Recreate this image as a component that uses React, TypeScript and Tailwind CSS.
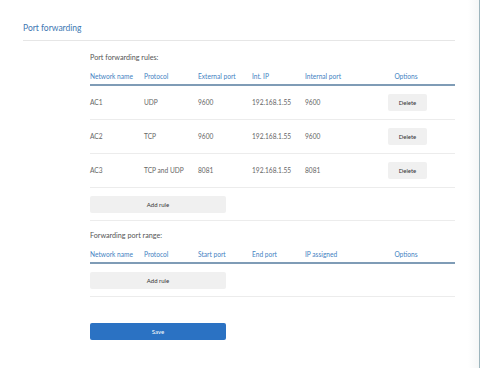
import React from "react";

const rules = [
  { name: "AC1", protocol: "UDP", ext: "9600", ip: "192.168.1.55", internal: "9600" },
  { name: "AC2", protocol: "TCP", ext: "9600", ip: "192.168.1.55", internal: "9600" },
  { name: "AC3", protocol: "TCP and UDP", ext: "8081", ip: "192.168.1.55", internal: "8081" },
];

const cols = "grid grid-cols-[54px_54px_54px_53px_54px_1fr] items-center";

function HeaderRow({ labels }: { labels: string[] }) {
  return (
    <div className={`${cols} h-[16px] border-b-2 border-[#7f9cb6] text-[6.6px] text-[#4382c2]`}>
      {labels.map((l, i) => (
        <div key={l} className={i === 5 ? "text-center pr-[2px]" : ""}>
          {l}
        </div>
      ))}
    </div>
  );
}

function AddRule() {
  return (
    <div className="h-[33px] flex items-center border-b border-[#ececec]">
      <button className="w-[136px] h-[17px] bg-[#f0f0f0] rounded-[2px] text-[6px] text-[#333]">
        Add rule
      </button>
    </div>
  );
}

export default function App() {
  return (
    <div
      className="w-[480px] h-[368px] bg-white relative overflow-hidden text-[#666]"
      style={{ fontFamily: "Lato, 'Open Sans', sans-serif" }}
    >
      <div className="absolute right-0 top-0 h-full w-[12px] bg-gradient-to-r from-white to-[#f4f6f6]" />
      <div className="absolute right-0 top-0 h-full w-[1px] bg-[#9db5bd]" />

      <div className="pl-[23px] pr-[25px] pt-[21px] relative">
        <div className="text-[8.5px] leading-[14px] text-[#4077b2] h-[19px]">Port forwarding</div>
        <div className="h-[1px] bg-[#e6e6e6]" />

        <div className="ml-[67px]">
          <div className="text-[7.2px] h-[16px] mt-[9px] leading-[16px] text-[#555]">Port forwarding rules:</div>
          <div className="mt-[4px]">
            <HeaderRow labels={["Network name", "Protocol", "External port", "Int. IP", "Internal port", "Options"]} />
          </div>
          {rules.map((r) => (
            <div key={r.name} className={`${cols} h-[34px] border-b border-[#ececec] text-[6.6px]`}>
              <div>{r.name}</div>
              <div>{r.protocol}</div>
              <div>{r.ext}</div>
              <div>{r.ip}</div>
              <div>{r.internal}</div>
              <div className="flex justify-center pl-[1px]">
                <button className="w-[39px] h-[17px] bg-[#f0f0f0] rounded-[2px] text-[6px] text-[#333]">
                  Delete
                </button>
              </div>
            </div>
          ))}
          <AddRule />

          <div className="text-[7.2px] h-[16px] mt-[7px] leading-[16px] text-[#555]">Forwarding port range:</div>
          <div className="mt-[4px]">
            <HeaderRow labels={["Network name", "Protocol", "Start port", "End port", "IP assigned", "Options"]} />
          </div>
          <AddRule />

          <button className="mt-[26px] w-[136px] h-[17px] bg-[#2b72c3] rounded-[2px] text-[6px] text-white">
            Save
          </button>
        </div>
      </div>
    </div>
  );
}
